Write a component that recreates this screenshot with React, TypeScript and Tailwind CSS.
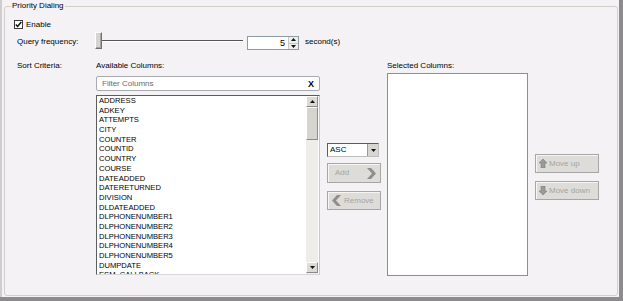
import React from 'react';

const columns = [
  'ADDRESS',
  'ADKEY',
  'ATTEMPTS',
  'CITY',
  'COUNTER',
  'COUNTID',
  'COUNTRY',
  'COURSE',
  'DATEADDED',
  'DATERETURNED',
  'DIVISION',
  'DLDATEADDED',
  'DLPHONENUMBER1',
  'DLPHONENUMBER2',
  'DLPHONENUMBER3',
  'DLPHONENUMBER4',
  'DLPHONENUMBER5',
  'DUMPDATE',
  'ESM_CALLBACK',
];

function Chevron({ dir }: { dir: 'left' | 'right' }) {
  const pts = dir === 'right' ? '0,0 4,0 9,5.5 4,11 0,11 5,5.5' : '9,0 5,0 0,5.5 5,11 9,11 4,5.5';
  return (
    <svg width="9" height="11" viewBox="0 0 9 11" aria-hidden="true">
      <polygon points={pts} fill="#8e8e8e" />
    </svg>
  );
}

function BlockArrow({ dir }: { dir: 'up' | 'down' }) {
  const pts = dir === 'up' ? '4,0 8,4 6,4 6,9 2,9 2,4 0,4' : '4,9 8,5 6,5 6,0 2,0 2,5 0,5';
  return (
    <svg width="8" height="9" viewBox="0 0 8 9" aria-hidden="true">
      <polygon points={pts} fill="#9a9a9a" stroke="#7c7c7c" strokeWidth="0.6" />
    </svg>
  );
}

function Tri({ dir, size = 5 }: { dir: 'up' | 'down'; size?: number }) {
  const h = Math.ceil(size / 2);
  const pts = dir === 'up' ? `0,${h} ${size},${h} ${size / 2},0` : `0,0 ${size},0 ${size / 2},${h}`;
  return (
    <svg width={size} height={h} viewBox={`0 0 ${size} ${h}`} aria-hidden="true">
      <polygon points={pts} fill="#111" />
    </svg>
  );
}

export default function App() {
  return (
    <div className="w-[623px] h-[301px] bg-[#8c8c8c] overflow-hidden font-['Liberation_Sans',Arial,sans-serif] text-[8px] leading-[10px] text-black">
      <div className="w-[619px] h-[297px] bg-[#f5f2f5] border-l-2 border-[#cfcdcf] pl-[2px]">
        <fieldset className="w-[614px] h-[296px] border border-[#d0cfca] rounded-[3px]">
          <legend className="ml-[6px] px-[1px] h-[12px] leading-[12px]">Priority Dialing</legend>

          {/* Enable */}
          <div className="flex items-center h-[9px] mt-[8px] ml-[9px]">
            <div className="w-[9px] h-[9px] border border-[#3a3a3a] bg-white flex items-center justify-center">
              <svg width="7" height="7" viewBox="0 0 7 7" aria-hidden="true">
                <polyline points="0.8,3.4 2.6,5.4 6.3,1" fill="none" stroke="#111" strokeWidth="1.5" />
              </svg>
            </div>
            <span className="ml-[3px]">Enable</span>
          </div>

          {/* Query frequency */}
          <div className="flex items-center h-[18px] mt-[3px] ml-[12px]">
            <span className="w-[78px] pt-[2px]">Query frequency:</span>
            <div className="flex items-center w-[148px] h-[18px]">
              <div className="w-[7px] h-[17px] self-start bg-[#d6d4d0] border border-t-white border-l-white border-r-[#707070] border-b-[#707070] shadow-[inset_-1px_-1px_0_#a8a6a2]" />
              <div className="flex-1 h-[2px] border-t border-[#555] border-b border-b-white" />
            </div>
            <div className="self-end ml-[4px] w-[52px] h-[14px] bg-white border border-[#8f9aa6] flex">
              <span className="flex-1 text-right pr-[3px] leading-[12px] text-[9px]">5</span>
              <div className="w-[10px] flex flex-col border-l border-[#c6c6c6]">
                <div className="flex-1 flex items-center justify-center bg-[#eeeeec] border-b border-[#c6c6c6]">
                  <Tri dir="up" size={5} />
                </div>
                <div className="flex-1 flex items-center justify-center bg-[#eeeeec]">
                  <Tri dir="down" size={5} />
                </div>
              </div>
            </div>
            <span className="ml-[6px] pt-[2px]">second(s)</span>
          </div>

          {/* Sort criteria */}
          <div className="flex mt-[11px] ml-[12px]">
            <span className="w-[79px] h-[10px]">Sort Criteria:</span>

            <div className="w-[224px] flex flex-col">
              <span className="h-[10px]">Available Columns:</span>
              <div className="mt-[5px] h-[15px] bg-white border border-[#a7abb0] rounded-[2px] flex items-center pl-[5px] pr-[5px]">
                <span className="flex-1 text-[#6a6a6a]">Filter Columns</span>
                <span className="font-bold text-[9px]">X</span>
              </div>
              <div className="mt-[4px] h-[180px] bg-white border border-t-[#5c5c5c] border-l-[#5c5c5c] border-r-[#c8c8c8] border-b-[#d8d8d8] flex overflow-hidden">
                <ul className="flex-1 pl-[2px] text-[7.6px] leading-[9.7px] overflow-hidden">
                  {columns.map((c) => (
                    <li key={c} className="h-[9.7px] whitespace-nowrap">{c}</li>
                  ))}
                </ul>
                <div className="w-[12px] flex flex-col bg-[#eeede9] mr-[1px]">
                  <div className="h-[11px] flex items-center justify-center bg-[#dcdad5] border border-t-white border-l-white border-r-[#8a8a8a] border-b-[#8a8a8a]">
                    <Tri dir="up" size={5} />
                  </div>
                  <div className="h-[33px] bg-[#d6d4cf] border border-t-white border-l-white border-r-[#8a8a8a] border-b-[#8a8a8a]" />
                  <div className="flex-1" />
                  <div className="h-[11px] mb-[1px] flex items-center justify-center bg-[#dcdad5] border border-t-white border-l-white border-r-[#8a8a8a] border-b-[#8a8a8a]">
                    <Tri dir="down" size={5} />
                  </div>
                </div>
              </div>
            </div>

            <div className="ml-[7px] w-[54px] pt-[82px] flex flex-col">
              <div className="w-[52px] h-[14px] bg-white border border-t-[#5c5c5c] border-l-[#5c5c5c] border-r-[#bdbdbd] border-b-[#bdbdbd] flex">
                <span className="flex-1 pl-[2px] leading-[12px]">ASC</span>
                <div className="w-[11px] bg-[#d8d6d2] border-l border-[#9a9a9a] flex items-center justify-center">
                  <Tri dir="down" size={5} />
                </div>
              </div>
              <div className="mt-[6px] h-[20px] bg-[#dedcd8] border border-[#a6a6a6] shadow-[inset_1px_1px_0_#f6f6f4] flex items-center pl-[7px] pr-[4px] text-[#a4a4a4]">
                <span className="flex-1">Add</span>
                <Chevron dir="right" />
              </div>
              <div className="mt-[8px] h-[19px] bg-[#dedcd8] border border-[#a6a6a6] shadow-[inset_1px_1px_0_#f6f6f4] flex items-center pl-[4px] text-[#a4a4a4]">
                <Chevron dir="left" />
                <span className="ml-[3px]">Remove</span>
              </div>
            </div>

            <div className="ml-[6px] w-[141px] flex flex-col">
              <span className="h-[10px]">Selected Columns:</span>
              <div className="mt-[2px] h-[203px] bg-white border border-[#8e8e8e]" />
            </div>

            <div className="ml-[7px] w-[64px] pt-[93px] flex flex-col">
              <div className="h-[19px] bg-[#dedcd8] border border-[#a6a6a6] shadow-[inset_1px_1px_0_#f6f6f4] flex items-center pl-[3px] text-[#a4a4a4]">
                <BlockArrow dir="up" />
                <span className="ml-[2px]">Move up</span>
              </div>
              <div className="mt-[8px] h-[19px] bg-[#dedcd8] border border-[#a6a6a6] shadow-[inset_1px_1px_0_#f6f6f4] flex items-center pl-[3px] text-[#a4a4a4]">
                <BlockArrow dir="down" />
                <span className="ml-[2px]">Move down</span>
              </div>
            </div>
          </div>
        </fieldset>
      </div>
    </div>
  );
}
